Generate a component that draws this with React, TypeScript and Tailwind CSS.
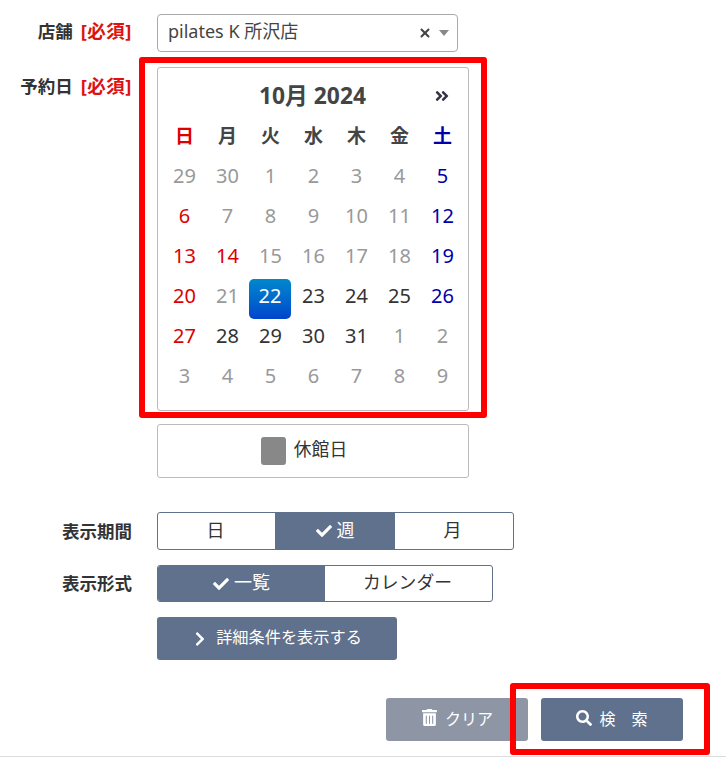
import { FaCheck, FaSearch, FaTrashAlt, FaChevronRight, FaAngleDoubleRight } from "react-icons/fa";
import { X } from "lucide-react";

const font = { fontFamily: '"Noto Sans", "Noto Sans CJK JP", sans-serif' };

type Tone = "muted" | "red" | "blue" | "dark";
const tones: Record<Tone, string> = {
  muted: "text-[#999999]",
  red: "text-[#dd0000]",
  blue: "text-[#0000aa]",
  dark: "text-[#333333]",
};

const weeks: [string, Tone][][] = [
  [["29", "muted"], ["30", "muted"], ["1", "muted"], ["2", "muted"], ["3", "muted"], ["4", "muted"], ["5", "blue"]],
  [["6", "red"], ["7", "muted"], ["8", "muted"], ["9", "muted"], ["10", "muted"], ["11", "muted"], ["12", "blue"]],
  [["13", "red"], ["14", "red"], ["15", "muted"], ["16", "muted"], ["17", "muted"], ["18", "muted"], ["19", "blue"]],
  [["20", "red"], ["21", "muted"], ["22", "dark"], ["23", "dark"], ["24", "dark"], ["25", "dark"], ["26", "blue"]],
  [["27", "red"], ["28", "dark"], ["29", "dark"], ["30", "dark"], ["31", "dark"], ["1", "muted"], ["2", "muted"]],
  [["3", "muted"], ["4", "muted"], ["5", "muted"], ["6", "muted"], ["7", "muted"], ["8", "muted"], ["9", "muted"]],
];

const heads: [string, string][] = [
  ["日", "text-[#dd0000]"],
  ["月", "text-[#444444]"],
  ["火", "text-[#444444]"],
  ["水", "text-[#444444]"],
  ["木", "text-[#444444]"],
  ["金", "text-[#444444]"],
  ["土", "text-[#0000aa]"],
];

function Label({ text, required }: { text: string; required?: boolean }) {
  return (
    <div className="w-[132px] shrink-0 flex justify-end items-center text-[17.5px] font-bold text-[#333333] leading-[22px]">
      {text}
      {required && <span className="text-[#dd1111] text-[18.5px] ml-[8px] tracking-[0.5px]">[必須]</span>}
    </div>
  );
}

export default function App() {
  return (
    <div className="relative w-[726px] h-[758px] bg-white overflow-hidden" style={font}>
      <div className="flex flex-col pt-[14px] h-[757px] border-b border-[#dddddd]">
        {/* Store */}
        <div className="flex">
          <div className="pt-[6px]"><Label text="店舗" required /></div>
          <div className="ml-[25px] w-[301px] h-[38px] rounded border border-[#aaaaaa] flex items-center pl-[10px] pr-[8px] text-[18px] text-[#444444]">
            <span className="flex-1 pb-[3px]">pilates K 所沢店</span>
            <X size={14} strokeWidth={3.5} className="text-[#444444] mr-[7px]" />
            <span className="w-0 h-0 border-x-[5px] border-x-transparent border-t-[6px] border-t-[#888888]" />
          </div>
        </div>

        {/* Date */}
        <div className="flex mt-[15px]">
          <div className="pt-[8px]"><Label text="予約日" required /></div>
          <div className="ml-[25px] w-[312px]">
            <div className="h-[344px] rounded-[3px] border border-[#bbbbbb] px-[5px]">
              <div className="relative h-[51px] pt-[6px] flex items-center justify-center text-[22.8px] font-bold text-[#444444] pr-[1px]">
                10月 2024
                <FaAngleDoubleRight size={16} className="absolute right-[13px] top-[20px] text-[#333344]" />
              </div>
              <div className="grid grid-cols-[repeat(7,43px)] auto-rows-[40px]">
                {heads.map(([h, c]) => (
                  <div key={h} className={`flex items-center justify-center pb-[6px] text-[19px] font-bold ${c}`}>{h}</div>
                ))}
                {weeks.flat().map(([d, tone], i) =>
                  i === 23 ? (
                    <div key={i} className="w-[42px] h-[40px] rounded-[5px] bg-gradient-to-b from-[#0088cc] to-[#0044cc] text-white flex items-center justify-center pb-[6px] text-[20px]">
                      {d}
                    </div>
                  ) : (
                    <div key={i} className={`flex items-center justify-center pb-[6px] text-[20px] ${tones[tone]}`}>{d}</div>
                  )
                )}
              </div>
            </div>
            <div className="mt-[13px] h-[54px] rounded-[3px] border border-[#bbbbbb] flex items-center justify-center gap-[8px] pr-[18px] text-[17.8px] text-[#333333]">
              <span className="w-[25px] h-[28px] rounded-[3px] bg-[#888888]" />
              <span className="pb-[3px]">休館日</span>
            </div>
          </div>
        </div>

        {/* Period */}
        <div className="flex mt-[34px]">
          <div className="pt-[8px]"><Label text="表示期間" /></div>
          <div className="ml-[25px] w-[357px] h-[38px] rounded-[3px] border border-[#5f718c] flex text-[18px] text-[#333333] overflow-hidden">
            <div className="w-[117px] flex items-center justify-center pb-[2px] pr-[2px]">日</div>
            <div className="w-[120px] flex items-center justify-center gap-[5px] bg-[#5f718c] text-white pb-[2px]">
              <FaCheck size={16} className="mt-[2px]" />週
            </div>
            <div className="flex-1 flex items-center justify-center pb-[2px] pr-[3px]">月</div>
          </div>
        </div>

        {/* Format */}
        <div className="flex mt-[15px]">
          <div className="pt-[7px]"><Label text="表示形式" /></div>
          <div className="ml-[25px] w-[336px] h-[37px] rounded-[3px] border border-[#5f718c] flex text-[18px] text-[#333333] overflow-hidden">
            <div className="w-[167px] flex items-center justify-center gap-[5px] bg-[#5f718c] text-white pb-[2px]">
              <FaCheck size={16} className="mt-[2px]" />一覧
            </div>
            <div className="flex-1 flex items-center justify-center pb-[2px] pr-[2px] text-[17.8px]">カレンダー</div>
          </div>
        </div>

        {/* Details */}
        <div className="ml-[157px] mt-[15px] w-[240px] h-[43px] rounded-[3px] bg-[#5f718c] text-white text-[16.2px] flex items-center justify-center gap-[8px]">
          <FaChevronRight size={16} />
          <span className="pb-[3px]">詳細条件を表示する</span>
        </div>

        {/* Actions */}
        <div className="flex justify-end gap-[13px] mt-[38px] pr-[43px]">
          <div className="w-[142px] h-[43px] rounded-[3px] bg-[#8e96a6] text-white text-[16px] flex items-center justify-center gap-[7px]">
            <FaTrashAlt size={17} className="mb-[5px]" />
            <span className="pb-[1px]">クリア</span>
          </div>
          <div className="w-[142px] h-[43px] rounded-[3px] bg-[#5f718c] text-white text-[16px] flex items-center justify-center gap-[7px]">
            <FaSearch size={16} className="mb-[3px]" />
            <span className="whitespace-pre pb-[1px]">検　索</span>
          </div>
        </div>
      </div>

      {/* Annotation overlays */}
      <div className="absolute left-[139px] top-[57px] w-[348px] h-[361px] border-[6px] border-[#ff0000] rounded-[3px] pointer-events-none" />
      <div className="absolute left-[510px] top-[683px] w-[200px] h-[72px] border-[6px] border-[#ff0000] rounded-[3px] pointer-events-none" />
    </div>
  );
}
